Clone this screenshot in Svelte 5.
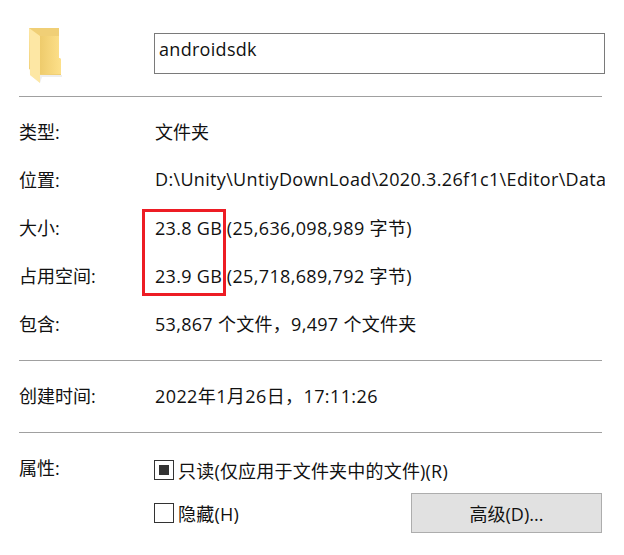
<script lang="ts">
	const general = [
		{ label: '类型:', value: '文件夹', cls: '' },
		{ label: '位置:', value: 'D:\\Unity\\UntiyDownLoad\\2020.3.26f1c1\\Editor\\Data', cls: 'clip' }
	];
	const sizes = [
		{ label: '大小:', value: '23.8 GB', bytes: '(25,636,098,989 字节)' },
		{ label: '占用空间:', value: '23.9 GB', bytes: '(25,718,689,792 字节)' }
	];
</script>

<div class="dialog">
	<div class="head">
		<svg class="folder" width="34" height="56" viewBox="0 0 34 56">
			<defs>
				<linearGradient id="back" x1="0" x2="1" y1="0" y2="0">
					<stop offset="0" stop-color="#eecb6c" />
					<stop offset="1" stop-color="#fde08a" />
				</linearGradient>
			</defs>
			<path d="M11 49H33V47H11ZM1 47L11 55L13 49Z" fill="#eee" />
			<path d="M0 0H30V30L32 31V47H11L0 41Z" fill="#f0cf76" />
			<path d="M11 8H30V30L32 31V46H11Z" fill="url(#back)" />
			<path d="M0 0L11 8V55L1 47Z" fill="#fde7a4" />
		</svg>
		<div class="name">androidsdk</div>
	</div>
	<hr class="first" />

	<div class="rows">
		{#each general as row}
			<div class="row">
				<span class="label">{row.label}</span>
				<span class="value {row.cls}">{row.value}</span>
			</div>
		{/each}
		{#each sizes as row}
			<div class="row">
				<span class="label">{row.label}</span>
				<span class="value"><span class="size">{row.value}</span> <span class="num">{row.bytes}</span></span>
			</div>
		{/each}
		<div class="row">
			<span class="label">包含:</span>
			<span class="value count">53,867 个文件，9,497 个文件夹</span>
		</div>
		<div class="highlight"></div>
	</div>
	<hr />

	<div class="row single">
		<span class="label">创建时间:</span>
		<span class="value date">2022年1月26日，17:11:26</span>
	</div>
	<hr />

	<div class="attrs">
		<span class="label attr-label">属性:</span>
		<div class="checks">
			<div class="check">
				<span class="box"><span class="mark"></span></span>
				<span class="caption">只读(仅应用于文件夹中的文件)(R)</span>
			</div>
			<div class="bottom">
				<div class="check">
					<span class="box"></span>
					<span class="caption">隐藏(H)</span>
				</div>
				<button>高级(D)...</button>
			</div>
		</div>
	</div>
</div>

<style>
	:global(body) {
		background: #fff;
	}

	.dialog {
		width: 624px;
		height: 555px;
		box-sizing: border-box;
		padding: 28px 19px 0 19px;
		overflow: hidden;
		color: #111;
		font-family: 'Open Sans', 'Noto Sans CJK SC', sans-serif;
		font-size: 18px;
		background: #fff;
	}

	.head {
		display: flex;
		height: 56px;
		padding-left: 10px;
	}

	.folder {
		flex: none;
	}

	.name {
		flex: none;
		box-sizing: border-box;
		width: 451px;
		height: 41px;
		margin: 5px 0 0 91px;
		padding: 3px 4px;
		border: 1px solid #7a7a7a;
		line-height: 24px;
		letter-spacing: 0.3px;
	}

	hr {
		width: 583px;
		height: 1px;
		margin: 0;
		border: 0;
		background: #a0a0a0;
	}

	.first {
		margin-top: 12px;
	}

	.rows {
		position: relative;
		padding-top: 10px;
		padding-bottom: 13px;
	}

	.row {
		display: flex;
		align-items: center;
		height: 48px;
		white-space: nowrap;
	}

	.single {
		height: 71px;
		padding-bottom: 3px;
		box-sizing: border-box;
	}

	.label {
		flex: none;
		width: 136px;
	}

	.attr-label {
		margin-top: -3px;
	}

	.value.clip {
		width: 451px;
		overflow: hidden;
		letter-spacing: 0.33px;
	}

	.size {
		letter-spacing: 0.3px;
	}

	.num {
		letter-spacing: 0.35px;
	}

	.date {
		letter-spacing: 0.4px;
	}

	.count {
		letter-spacing: 0.3px;
	}

	.highlight {
		position: absolute;
		left: 123px;
		top: 112px;
		width: 84px;
		height: 87px;
		box-sizing: border-box;
		border: 3px solid #ed1c24;
	}

	.attrs {
		display: flex;
		padding-top: 24px;
	}

	.checks {
		flex: 1;
		margin-left: -1px;
	}

	.check {
		display: flex;
		align-items: center;
		gap: 4px;
		height: 26px;
	}

	.caption {
		letter-spacing: 0.2px;
	}

	.box {
		display: flex;
		align-items: center;
		justify-content: center;
		box-sizing: border-box;
		width: 20px;
		height: 20px;
		border: 1px solid #333;
	}

	.mark {
		width: 10px;
		height: 10px;
		background: #333;
	}

	.bottom {
		display: flex;
		align-items: center;
		justify-content: space-between;
		width: 448px;
		margin-top: 10px;
	}

	button {
		width: 191px;
		height: 40px;
		border: 1px solid #adadad;
		background: #e1e1e1;
		color: #111;
		font: inherit;
	}
</style>
